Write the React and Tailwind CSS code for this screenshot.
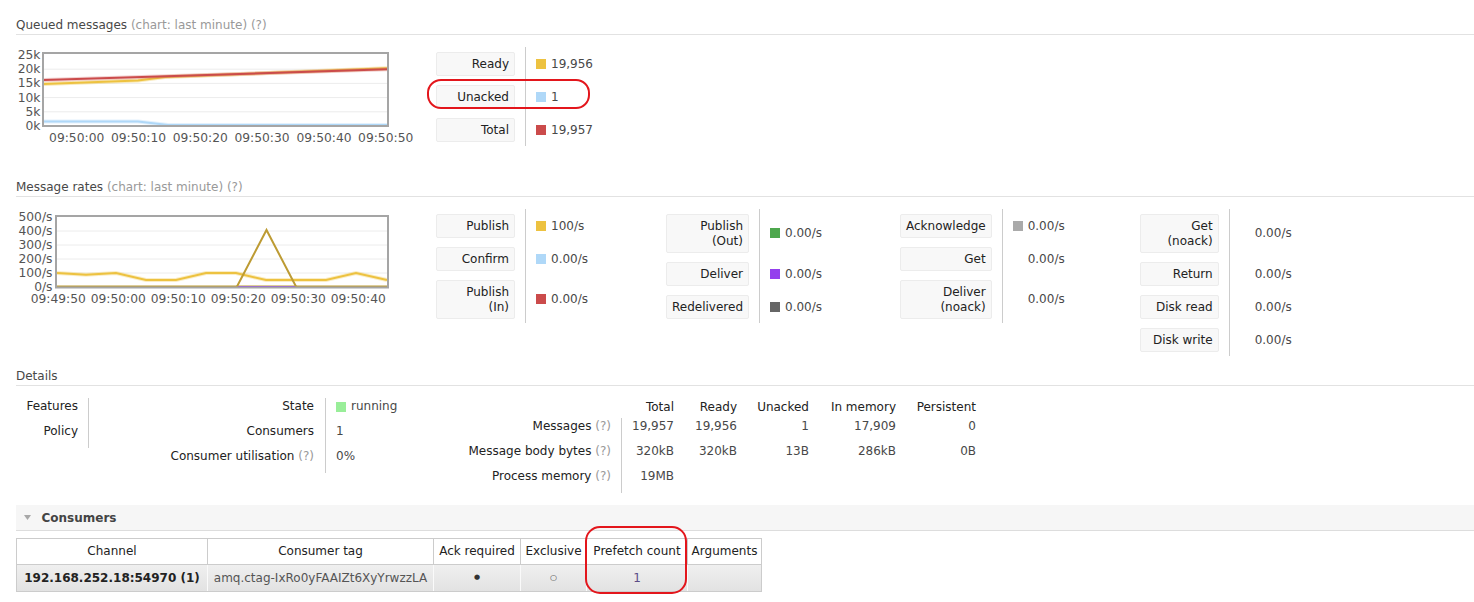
import { Fragment } from 'react';

const queuedRows = [
  { label: ['Ready'], value: '19,956', swatch: 'bg-[#edc240]' },
  { label: ['Unacked'], value: '1', swatch: 'bg-[#afd8f8]' },
  { label: ['Total'], value: '19,957', swatch: 'bg-[#cb4b4b]' },
];

const rateCols = [
  {
    cols: 'grid-cols-[auto_141px]',
    rows: [
      { label: ['Publish'], value: '100/s', swatch: 'bg-[#edc240]' },
      { label: ['Confirm'], value: '0.00/s', swatch: 'bg-[#afd8f8]' },
      { label: ['Publish', '(In)'], value: '0.00/s', swatch: 'bg-[#cb4b4b]' },
    ],
  },
  {
    cols: 'grid-cols-[auto_141px]',
    rows: [
      { label: ['Publish', '(Out)'], value: '0.00/s', swatch: 'bg-[#4da74d]' },
      { label: ['Deliver'], value: '0.00/s', swatch: 'bg-[#9440ed]' },
      { label: ['Redelivered'], value: '0.00/s', swatch: 'bg-[#666666]' },
    ],
  },
  {
    cols: 'grid-cols-[auto_138px]',
    rows: [
      { label: ['Acknowledge'], value: '0.00/s', swatch: 'bg-[#aaaaaa]' },
      { label: ['Get'], value: '0.00/s' },
      { label: ['Deliver', '(noack)'], value: '0.00/s' },
    ],
  },
  {
    cols: 'grid-cols-[auto_141px]',
    rows: [
      { label: ['Get', '(noack)'], value: '0.00/s' },
      { label: ['Return'], value: '0.00/s' },
      { label: ['Disk read'], value: '0.00/s' },
      { label: ['Disk write'], value: '0.00/s' },
    ],
  },
];

function Heading({ title, sub, className }) {
  return (
    <h3 className={`pb-[1px] leading-[15px] border-b border-[#e2e2e2] text-[#484848] ${className}`}>
      {title}
      {sub && <span className="text-[#999]"> {sub}</span>}
    </h3>
  );
}

function Legend({ rows, cols = 'grid-cols-[auto_141px]' }) {
  return (
    <div className={`grid ${cols} self-start`}>
      {rows.map((r) => (
        <Fragment key={r.label.join(' ')}>
          <div className="py-[4.5px] pr-[10px]">
            <div className="min-w-[79px] px-[5px] pt-[4.5px] pb-[2.5px] leading-[15px] text-right text-[#222] bg-[#f8f8f8] border border-[#ececec] rounded-[2px]">
              {r.label.map((l, i) => (
                <div key={i}>{l}</div>
              ))}
            </div>
          </div>
          <div className="border-l border-[#cccccc] pl-[10px] flex items-center text-[#484848]">
            <span className={`w-[10px] h-[10px] mr-[5px] ${r.swatch || ''}`} />
            {r.value}
          </div>
        </Fragment>
      ))}
    </div>
  );
}

const axisText = { fontSize: 12.3, fill: '#545454', fontFamily: 'DejaVu Sans, sans-serif' };

function QueuedChart() {
  const ys = [55, 69.2, 83.4, 97.6, 111.8, 126];
  const yl = ['25k', '20k', '15k', '10k', '5k', '0k'];
  const xs = [76.7, 138.5, 200.3, 262, 324, 385.7];
  const xl = ['09:50:00', '09:50:10', '09:50:20', '09:50:30', '09:50:40', '09:50:50'];
  return (
    <svg width="420" height="100" viewBox="16 47 420 100" className="block shrink-0">
      {ys.slice(1, 5).map((y) => (
        <line key={y} x1="44" x2="387" y1={y} y2={y} stroke="#ececec" strokeWidth="1" />
      ))}
      <polyline points="44,121.5 138,121.5 168,125 387,125" fill="none" stroke="#afd8f8" strokeOpacity="0.35" strokeWidth="4" />
      <polyline points="44,121.5 138,121.5 168,125 387,125" fill="none" stroke="#afd8f8" strokeWidth="2" />
      <polyline points="44,84 138,80.5 165,77 387,68.3" fill="none" stroke="#edc240" strokeOpacity="0.35" strokeWidth="4" />
      <polyline points="44,84 138,80.5 165,77 387,68.3" fill="none" stroke="#edc240" strokeWidth="2" />
      <line x1="44" y1="80" x2="387" y2="69.3" stroke="#cb4b4b" strokeOpacity="0.25" strokeWidth="4" />
      <line x1="44" y1="80" x2="387" y2="69.3" stroke="#cb4b4b" strokeWidth="2" />
      <rect x="43" y="53" width="345" height="73" fill="none" stroke="#a5a5a5" strokeWidth="2" />
      {ys.map((y, i) => (
        <text key={y} x="40.5" y={y} textAnchor="end" dominantBaseline="central" style={axisText}>
          {yl[i]}
        </text>
      ))}
      {xs.map((x, i) => (
        <text key={x} x={x} y="137.5" textAnchor="middle" dominantBaseline="central" style={axisText}>
          {xl[i]}
        </text>
      ))}
    </svg>
  );
}

function RatesChart() {
  const ys = [217, 231, 245, 259, 273, 287];
  const yl = ['500/s', '400/s', '300/s', '200/s', '100/s', '0/s'];
  const xs = [58.3, 118.3, 178.3, 238.3, 298.3, 358.3];
  const xl = ['09:49:50', '09:50:00', '09:50:10', '09:50:20', '09:50:30', '09:50:40'];
  const publish = '57,273 86,274.7 116,273 146,280 176,280 206,273 236,273 266,280 296,280 326,280 356,273 387,280';
  return (
    <svg width="420" height="100" viewBox="16 209 420 100" className="block shrink-0">
      {ys.slice(1, 5).map((y) => (
        <line key={y} x1="57" x2="387" y1={y} y2={y} stroke="#ececec" strokeWidth="1" />
      ))}
      <polyline points={publish} fill="none" stroke="#edc240" strokeOpacity="0.3" strokeWidth="4" />
      <polyline points={publish} fill="none" stroke="#edc240" strokeWidth="2" />
      <line x1="57" y1="286.5" x2="387" y2="286.5" stroke="#bd9b33" strokeWidth="2" />
      <line x1="237" y1="287" x2="296" y2="287" stroke="#9440ed" strokeWidth="2" />
      <polyline points="237,286.5 266.5,230 296,286.5" fill="none" stroke="#bd9b33" strokeWidth="2" />
      <rect x="56" y="216" width="332" height="71.5" fill="none" stroke="#a5a5a5" strokeWidth="2" />
      {ys.map((y, i) => (
        <text key={y} x="52.5" y={y} textAnchor="end" dominantBaseline="central" style={axisText}>
          {yl[i]}
        </text>
      ))}
      {xs.map((x, i) => (
        <text key={x} x={x} y="298.8" textAnchor="middle" dominantBaseline="central" style={axisText}>
          {xl[i]}
        </text>
      ))}
    </svg>
  );
}

function Q() {
  return <span className="text-[#999]"> (?)</span>;
}

export default function App() {
  return (
    <div className="relative min-h-[602px] bg-white pl-[16px] font-['DejaVu_Sans',sans-serif] text-[12px] text-[#484848]">
      <Heading title="Queued messages" sub="(chart: last minute) (?)" className="pt-[18px]" />
      <div className="pt-[12px] h-[127px] flex items-start">
        <QueuedChart />
        <Legend rows={queuedRows} />
      </div>

      <Heading title="Message rates" sub="(chart: last minute) (?)" className="pt-[18px]" />
      <div className="pt-[12px] flex items-start">
        <RatesChart />
        {rateCols.map((c, i) => (
          <Legend key={i} rows={c.rows} cols={c.cols} />
        ))}
      </div>

      <Heading title="Details" className="pt-[13px]" />
      <div className="pt-[12px] flex items-start leading-[15px]">
        <div className="flex">
          <div className="w-[72px] pr-[10px] text-right text-[#222]">
            <div className="pt-[1px] pb-[9px]">Features</div>
            <div className="pt-[1px] pb-[9px]">Policy</div>
          </div>
          <div className="border-l border-[#cccccc]" />
        </div>

        <div className="grid grid-cols-[236px_100px]">
          <div className="pr-[11px] pt-[1px] pb-[9px] text-right text-[#222]">State</div>
          <div className="border-l border-[#cccccc] pl-[10px] pt-[1px] pb-[9px]">
            <div className="flex items-center h-[15px]">
              <span className="w-[10px] h-[10px] mr-[5px] bg-[#99ee99]" />
              running
            </div>
          </div>
          <div className="pr-[11px] pt-[1px] pb-[9px] text-right text-[#222]">Consumers</div>
          <div className="border-l border-[#cccccc] pl-[10px] pt-[1px] pb-[9px]">1</div>
          <div className="pr-[11px] pt-[1px] pb-[9px] text-right text-[#222]">
            Consumer utilisation<Q />
          </div>
          <div className="border-l border-[#cccccc] pl-[10px] pt-[1px] pb-[9px]">0%</div>
        </div>

        <div className="grid grid-cols-[196px_53px_63px_72px_87px_80px] text-right">
          <div className="pt-[1.5px] pb-[3.5px]" />
          <div className="pt-[1.5px] pb-[3.5px] text-[#222]">Total</div>
          <div className="pt-[1.5px] pb-[3.5px] text-[#222]">Ready</div>
          <div className="pt-[1.5px] pb-[3.5px] text-[#222]">Unacked</div>
          <div className="pt-[1.5px] pb-[3.5px] text-[#222]">In memory</div>
          <div className="pt-[1.5px] pb-[3.5px] text-[#222]">Persistent</div>

          <div className="pr-[10px] pt-[1px] pb-[9px] text-[#222]">
            Messages<Q />
          </div>
          <div className="border-l border-[#cccccc] pt-[1px] pb-[9px]">19,957</div>
          <div className="pt-[1px] pb-[9px]">19,956</div>
          <div className="pt-[1px] pb-[9px]">1</div>
          <div className="pt-[1px] pb-[9px]">17,909</div>
          <div className="pt-[1px] pb-[9px]">0</div>

          <div className="pr-[10px] pt-[1px] pb-[9px] text-[#222]">
            Message body bytes<Q />
          </div>
          <div className="border-l border-[#cccccc] pt-[1px] pb-[9px]">320kB</div>
          <div className="pt-[1px] pb-[9px]">320kB</div>
          <div className="pt-[1px] pb-[9px]">13B</div>
          <div className="pt-[1px] pb-[9px]">286kB</div>
          <div className="pt-[1px] pb-[9px]">0B</div>

          <div className="pr-[10px] pt-[1px] pb-[9px] text-[#222]">
            Process memory<Q />
          </div>
          <div className="border-l border-[#cccccc] pt-[1px] pb-[9px]">19MB</div>
          <div className="pb-[10px]" />
          <div className="pb-[10px]" />
          <div className="pb-[10px]" />
          <div className="pb-[10px]" />
        </div>
      </div>

      <div className="mt-[12px] h-[26px] bg-[#f6f6f6] border-b border-[#dddddd] flex items-center">
        <svg width="7" height="5" viewBox="0 0 7 5" className="ml-[7.5px] mr-[11px]">
          <polygon points="0,0 7,0 3.5,5" fill="#a8a8a8" />
        </svg>
        <span className="font-bold text-[#444]">Consumers</span>
      </div>

      <table className="mt-[6.5px] w-[745px] table-fixed border-collapse text-center">
        <colgroup>
          <col className="w-[191px]" />
          <col className="w-[226px]" />
          <col className="w-[87px]" />
          <col className="w-[66px]" />
          <col className="w-[101px]" />
          <col className="w-[74px]" />
        </colgroup>
        <thead>
          <tr className="h-[26px]">
            {['Channel', 'Consumer tag', 'Ack required', 'Exclusive', 'Prefetch count', 'Arguments'].map((h) => (
              <th key={h} className="font-normal text-[#222] border border-[#cccccc] bg-white px-0 whitespace-nowrap">
                {h}
              </th>
            ))}
          </tr>
        </thead>
        <tbody>
          <tr className="h-[27px] bg-linear-to-b from-[#f0f0f0] to-[#e2e2e2]">
            <td className="border-b border-l border-[#cccccc] font-bold text-[#222] whitespace-nowrap">192.168.252.18:54970 (1)</td>
            <td className="border-b border-[#cccccc] border-l border-l-[#fafafa] text-[#555] whitespace-nowrap">amq.ctag-IxRo0yFAAIZt6XyYrwzzLA</td>
            <td className="border-b border-[#cccccc] border-l border-l-[#fafafa] text-[7px] text-[#333]">●</td>
            <td className="border-b border-[#cccccc] border-l border-l-[#fafafa] text-[8px] text-[#444]">○</td>
            <td className="border-b border-[#cccccc] border-l border-l-[#fafafa] text-[#5b4c86]">1</td>
            <td className="border-b border-r border-[#cccccc] border-l border-l-[#fafafa]"></td>
          </tr>
        </tbody>
      </table>

      <div className="absolute left-[427px] top-[79px] w-[163px] h-[30px] border-2 border-[#e3161c] rounded-[14px]" />
      <div className="absolute left-[585px] top-[526px] w-[102px] h-[68px] border-2 border-[#e3161c] rounded-[15px]" />
    </div>
  );
}
